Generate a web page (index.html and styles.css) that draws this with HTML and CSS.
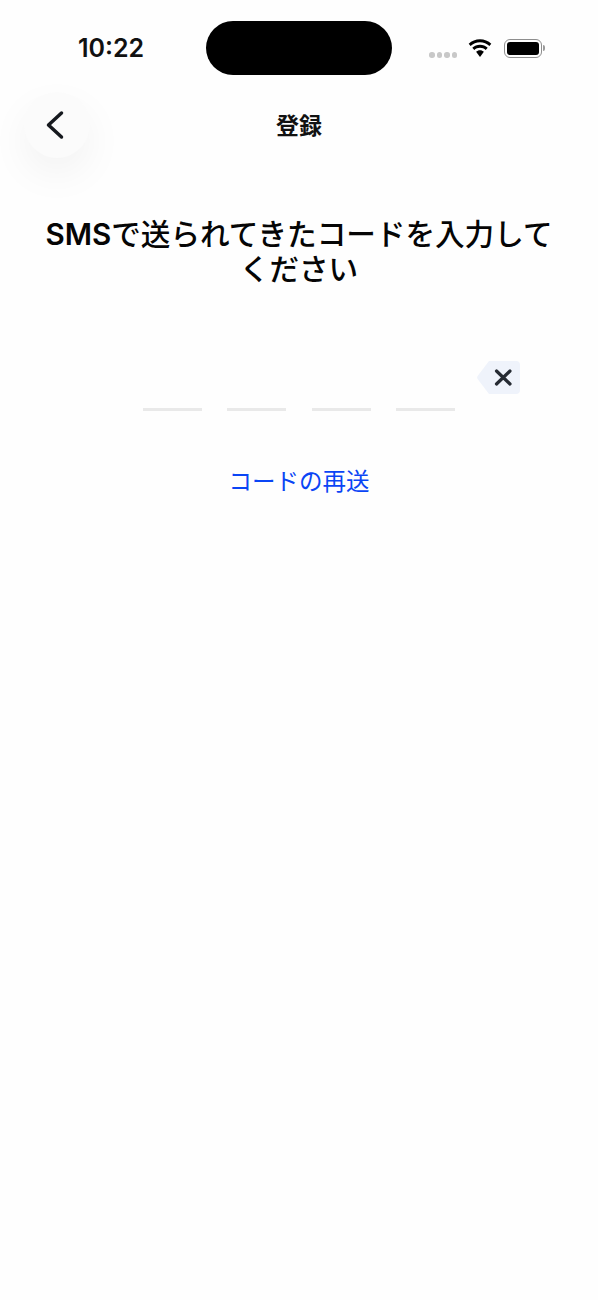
FILE: index.html
```html
<!DOCTYPE html>
<html lang="ja">
<head>
    <meta charset="UTF-8">
    <meta name="viewport" content="width=device-width, initial-scale=1.0">
    <title>登録</title>
    <link rel="stylesheet" href="styles.css">
</head>
<body>
    <div class="screen">
        <div class="status-bar">
            <span class="time">10:22</span>
            <div class="island"></div>
            <div class="status-icons">
                <div class="signal"><i></i><i></i><i></i><i></i></div>
                <svg class="wifi" width="26" height="19" viewBox="0 0 26 19">
                    <path d="M13 3.2c3.6 0 6.9 1.4 9.4 3.7l1.9-2.2C21.300 2 17.300.3 13 .3S4.700 2 1.700 4.700l1.900 2.200C6.100 4.600 9.400 3.200 13 3.200z" fill="#000"/>
                    <path d="M13 8.700c2.200 0 4.200.8 5.700 2.200l2-2.200C18.600 6.800 15.900 5.700 13 5.700s-5.600 1.100-7.700 3l2 2.200c1.500-1.400 3.500-2.200 5.700-2.200z" fill="#000"/>
                    <path d="M13 11.200c-1.500 0-2.900.6-3.900 1.500L13 18l3.900-5.300c-1-.9-2.400-1.500-3.900-1.500z" fill="#000"/>
                </svg>
                <div class="battery"><div class="battery-level"></div></div>
                <div class="battery-cap"></div>
            </div>
        </div>

        <div class="nav-bar">
            <button class="back-button">
                <svg width="24" height="32" viewBox="0 0 24 32">
                    <path d="M18.500 4 L5.500 16 L18.500 28" fill="none" stroke="#16191e" stroke-width="3.500" stroke-linecap="round" stroke-linejoin="round"/>
                </svg>
            </button>
            <h1 class="nav-title">登録</h1>
        </div>

        <h2 class="heading"><span class="latin">SMS</span>で送られてきたコードを入力してください</h2>

        <div class="code-row">
            <div class="code-slots">
                <div class="slot"></div>
                <div class="slot"></div>
                <div class="slot"></div>
                <div class="slot"></div>
            </div>
            <button class="delete-key">
                <svg width="43" height="33" viewBox="0 0 43 33">
                    <path d="M12 0 H39 a4 4 0 0 1 4 4 V29 a4 4 0 0 1 -4 4 H12 L1 18.500 a3 3 0 0 1 0 -4 Z" fill="#eff3fb"/>
                    <path d="M19.500 10 L33 23 M33 10 L19.500 23" stroke="#262b33" stroke-width="3.200" stroke-linecap="round"/>
                </svg>
            </button>
        </div>

        <a class="resend" href="#">コードの再送</a>
    </div>
</body>
</html>
```

FILE: styles.css
```css
* {
    box-sizing: border-box;
}
body {
    margin: 0;
    background: #fff;
    font-family: Inter, "Noto Sans CJK JP", sans-serif;
    color: #000;
}
.screen {
    position: relative;
    width: 598px;
    height: 1300px;
    overflow: hidden;
    background: #fefefe;
}
.status-bar {
    display: flex;
    justify-content: space-between;
    align-items: center;
    height: 92px;
    padding: 4px 53px 0 78px;
}
.time {
    font-size: 25px;
    font-weight: 600;
    color: #111;
}
.island {
    position: absolute;
    left: 206px;
    top: 21px;
    width: 186px;
    height: 54px;
    border-radius: 27px;
    background: #000;
}
.status-icons {
    display: flex;
    align-items: center;
}
.signal {
    display: flex;
    gap: 2px;
    margin-top: 14px;
    margin-right: 10px;
}
.signal i {
    display: block;
    width: 5.500px;
    height: 5.500px;
    border-radius: 50%;
    background: #c8c8c8;
}
.wifi {
    margin-right: 11px;
    margin-top: 1px;
}
.battery {
    width: 38px;
    height: 19px;
    padding: 2px;
    border: 1.500px solid #8e8e8e;
    border-radius: 6px;
}
.battery-level {
    height: 100%;
    border-radius: 3px;
    background: #000;
}
.battery-cap {
    width: 2px;
    height: 6px;
    margin-left: 1px;
    border-radius: 0 2px 2px 0;
    background: #9a9a9a;
}
.nav-bar {
    position: relative;
    display: flex;
    justify-content: center;
    align-items: center;
    height: 66px;
    padding-bottom: 3px;
}
.back-button {
    position: absolute;
    left: 24px;
    top: 0;
    display: flex;
    justify-content: center;
    align-items: center;
    width: 66px;
    height: 66px;
    padding: 0 4px 0 0;
    border: none;
    border-radius: 50%;
    background: #fbfbfb;
    box-shadow: 0 16px 40px rgba(0, 0, 0, 0.05);
}
.nav-title {
    margin: 0;
    font-size: 23px;
    font-weight: 700;
    color: #111;
}
.heading {
    width: 520px;
    margin: 59px auto 0;
    font-size: 29.600px;
    line-height: 35px;
    font-weight: 500;
    text-align: center;
    color: #050505;
}
.latin {
    font-weight: 600;
}
.code-row {
    display: flex;
    align-items: flex-start;
    margin-top: 74px;
    padding-left: 143px;
}
.code-slots {
    display: flex;
    gap: 25.400px;
    margin-top: 47px;
}
.slot {
    width: 59px;
    height: 3px;
    background: #e9e9e9;
}
.delete-key {
    display: block;
    margin-left: 22px;
    padding: 0;
    border: none;
    background: none;
}
.resend {
    display: block;
    margin-top: 54px;
    font-size: 23.500px;
    line-height: 34px;
    text-align: center;
    text-decoration: none;
    color: #0a45f5;
}
```
